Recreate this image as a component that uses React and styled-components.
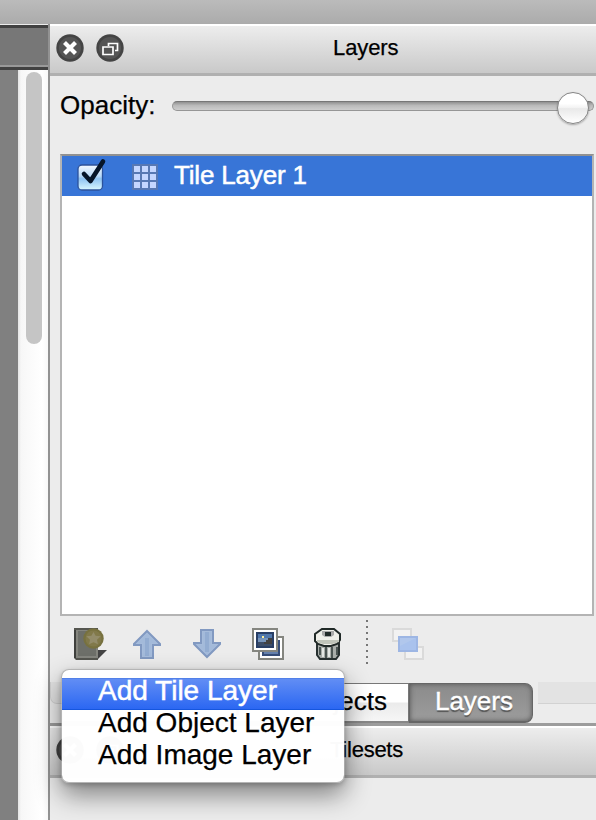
import React from "react";
import styled, { createGlobalStyle, css } from "styled-components";

const Global = createGlobalStyle`
  * { box-sizing: border-box; }
  body { margin: 0; background: #ececec; font-family: "Liberation Sans", Arial, sans-serif; color: #000; overflow: hidden; -webkit-text-stroke: 0.25px currentColor; }
`;

const Window = styled.div`
  position: relative;
  width: 596px;
  height: 820px;
  display: flex;
  flex-direction: column;
  overflow: hidden;
  background: #ececec;
`;
const WindowChrome = styled.div`
  height: 24px;
  flex: none;
  background: linear-gradient(#bbb, #ababab);
`;
const Body = styled.div`
  flex: 1;
  display: flex;
  min-height: 0;
`;
const Editor = styled.div`
  width: 48px;
  display: flex;
  flex-direction: column;
`;
const EditorTabs = styled.div`
  height: 45px;
  flex: none;
  margin-top: 1px;
  border-top: 3px solid #414141;
  border-bottom: 3px solid #414141;
  background: linear-gradient(#777 0 37px, #999 37px);
`;
const EditorArea = styled.div`
  flex: 1;
  display: flex;
`;
const Canvas = styled.div`
  width: 18px;
  background: #808080;
`;
const ScrollTrack = styled.div`
  width: 30px;
  padding: 2px 6px 0 8px;
  background: linear-gradient(90deg, #e4e4e4, #f7f7f7 3px, #fafafa 10px, #fff 24px, #f8f8f8);
`;
const ScrollThumb = styled.div`
  height: 272px;
  border-radius: 8px;
  background: #c5c5c5;
`;
const Dock = styled.div`
  flex: 1;
  display: flex;
  flex-direction: column;
  min-width: 0;
  border-left: 2px solid #929292;
`;
const DockHeader = styled.div`
  height: 52px;
  flex: none;
  display: flex;
  align-items: center;
  gap: 12px;
  padding: 0 0 4px 6px;
  border-top: 2px solid #fff;
  border-bottom: 3px solid #b0b0b0;
  background: linear-gradient(#ededed, #c9c9c9);
  svg { display: block; flex: none; }
`;
const DockTitle = styled.h2`
  flex: 1;
  margin: 0 98px 0 0;
  padding-left: ${(p) => p.$indent}px;
  font-size: 22px;
  line-height: 26px;
  font-weight: 400;
  letter-spacing: ${(p) => p.$tracking || 0}px;
  white-space: nowrap;
`;
const OpacityRow = styled.div`
  height: 78px;
  flex: none;
  display: flex;
  align-items: flex-start;
  padding: 14px 2px 0 10px;
`;
const Label = styled.label`
  width: 112px;
  font-size: 26px;
  line-height: 30px;
`;
const Groove = styled.div`
  flex: 1;
  height: 10px;
  margin-top: 11px;
  display: flex;
  align-items: center;
  justify-content: flex-end;
  padding: 4px 4px 0 0;
  border: 1px solid #969696;
  border-top-color: #777;
  border-radius: 5px;
  background: linear-gradient(#919191, #bbb 45%, #cdcdcd);
`;
const Knob = styled.div`
  width: 32px;
  height: 32px;
  flex: none;
  border-radius: 50%;
  border: 1px solid #858585;
  background: linear-gradient(#fff 35%, #f2f2f2 50%, #e9e9e9 52%, #fff);
  box-shadow: 0 1px 2px rgba(0, 0, 0, 0.3);
`;
const LayerList = styled.div`
  height: 462px;
  flex: none;
  margin: 0 2px 0 10px;
  border: 2px solid #b4b4b4;
  border-top-color: #919191;
  background: #fff;
`;
const LayerRow = styled.div`
  height: 40px;
  display: flex;
  align-items: center;
  padding-left: 14px;
  color: #fff;
  background: #3875d7;
  font-size: 26px;
  svg { display: block; flex: none; }
`;
const GridSlot = styled.span`
  display: flex;
  margin: 2px 0 0 24px;
`;
const LayerName = styled.span`
  margin-left: 16px;
  line-height: 30px;
  padding-bottom: 3px;
  letter-spacing: -0.18px;
  -webkit-text-stroke: 0.5px #fff;
`;
const Toolbar = styled.div`
  height: 66px;
  flex: none;
  display: flex;
  align-items: flex-start;
  padding: 12px 0 0 22px;
  svg { width: 36px; height: 32px; flex: none; margin-right: 24px; }
`;
const ToolSeparator = styled.i`
  width: 2px;
  height: 44px;
  margin: -8px 24px 0 -6px;
  background: repeating-linear-gradient(#777 0 2px, transparent 2px 6px);
`;
const TabBar = styled.div`
  height: 44px;
  flex: none;
  display: flex;
  border-bottom: 3px solid #9c9c9c;
`;
const TabPane = styled.div`
  height: 22px;
  flex: ${(p) => (p.$grow ? 1 : "none")};
  width: 12px;
  margin-left: ${(p) => (p.$grow ? 5 : 0)}px;
  border: solid #d2d2d2;
  border-width: ${(p) => (p.$grow ? "0 0 1px" : "0 0 1px 1px")};
  border-bottom-left-radius: ${(p) => (p.$grow ? 0 : 7)}px;
  background: #e3e3e3;
`;
const Tab = styled.div`
  width: ${(p) => p.$width}px;
  height: 40px;
  margin-top: 1px;
  border: 1px solid #777;
  border-bottom: 2px solid #888;
  text-align: right;
  padding-right: ${(p) => p.$inset}px;
  font-size: 26px;
  line-height: 34px;
  white-space: nowrap;
  background: linear-gradient(#fff 48%, #ebebeb 52%, #f6f6f6);
  ${(p) =>
    p.$active &&
    css`
      color: #fff;
      border-color: #666;
      border-radius: 0 8px 8px 0;
      background: linear-gradient(#8b8b8b, #9c9c9c);
      box-shadow: inset 0 0 5px #555;
      text-shadow: 0 2px 1px #555;
      -webkit-text-stroke: 0.4px #fff;
    `}
`;
const Menu = styled.div`
  position: absolute;
  left: 61px;
  top: 669px;
  width: 284px;
  height: 114px;
  padding: 8px 0;
  border: 1px solid rgba(145, 145, 145, 0.6);
  border-radius: 8px;
  background: rgba(255, 255, 255, 0.98);
  background-clip: padding-box;
  box-shadow: 0 12px 26px rgba(0, 0, 0, 0.45), 0 2px 5px rgba(0, 0, 0, 0.2);
`;
const MenuItem = styled.div`
  height: 32px;
  padding-left: 36px;
  font-size: 28px;
  line-height: 25px;
  letter-spacing: ${(p) => p.$tracking || 0}px;
  white-space: nowrap;
  ${(p) =>
    p.$selected &&
    css`
      color: #fff;
      -webkit-text-stroke: 0.5px #fff;
      background: linear-gradient(rgba(94, 139, 244, 0.98), rgba(39, 100, 242, 0.98));
      border-top: 1px solid #5280e8;
      border-bottom: 1px solid #1656de;
      line-height: 23px;
    `}
`;

const CloseIcon = () => (
  <svg width="28" height="28" viewBox="0 0 28 28">
    <circle cx="14" cy="14" r="13.7" fill="#444" />
    <circle cx="14" cy="14" r="11" fill="#555" />
    <path d="M8.5 8.5l11 11m0-11l-11 11" stroke="#fff" strokeWidth="4.2" />
  </svg>
);
const FloatIcon = () => (
  <svg width="28" height="28" viewBox="0 0 28 28">
    <circle cx="14" cy="14" r="13.7" fill="#444" />
    <circle cx="14" cy="14" r="11" fill="#555" />
    <path d="M12.5 12V9.5h9v7H19M7 13h10v7.5H7z" fill="none" stroke="#fff" strokeWidth="1.7" />
  </svg>
);
const CheckIcon = () => (
  <svg width="32" height="40" viewBox="0 0 32 40">
    <defs>
      <linearGradient id="box" x2="0" y2="1">
        <stop stopColor="#f3f9ff" /><stop offset=".45" stopColor="#b8d9f8" />
        <stop offset=".55" stopColor="#8fc3f2" /><stop offset="1" stopColor="#d9f8ff" />
      </linearGradient>
    </defs>
    <rect x="2" y="9" width="24.5" height="25" rx="4" fill="url(#box)" stroke="#2c529b" strokeWidth="1.3" />
    <path d="M8 18l6.5 7L27 5.5" fill="none" stroke="#061529" strokeWidth="4.6" strokeLinecap="round" strokeLinejoin="round" />
  </svg>
);
const GridIcon = () => (
  <svg width="26" height="26" viewBox="0 0 26 26">
    <path fill="#5878b3" d="M0 0h26v26H0z" />
    <path fill="#c5d6ff" d="M2 2h6v6H2zM10 2h6v6h-6zM18 2h6v6h-6zM2 10h6v6H2zM10 10h6v6h-6zM18 10h6v6h-6zM2 18h6v6H2zM10 18h6v6h-6zM18 18h6v6h-6z" />
  </svg>
);
const NewIcon = () => (
  <svg viewBox="0 0 36 32">
    <path d="M23 22h12l-9 9h-3z" fill="#434343" />
    <path d="M2 0h24v32H4l-2-2z" fill="#555650" />
    <path d="M4 2h22v28H4z" fill="#84857e" />
    <path d="M6 3h18v25H6z" fill="#6d6f69" />
    <path d="M2 2h2v28H2z" fill="#3f403d" />
    <circle cx="21.5" cy="10.5" r="10.2" fill="#77713f" />
    <circle cx="21.5" cy="10.5" r="8" fill="#81794a" />
    <path d="M21.5 4l2.1 3.7 5.1.6-3.7 3.5.9 4.5-4.4-2-4.4 2 .9-4.5-3.7-3.5 5.1-.6z" fill="#938c6a" />
  </svg>
);
const UpPath = "M15 3l13 13v1h-7v13H9V17H2v-1z";
const UpIcon = () => (
  <svg viewBox="0 0 36 32">
    <path d={UpPath} fill="#a6bcdb" stroke="#8199c1" strokeWidth="2" />
    <path d="M15 6l9 9h-5v13h-8V15H6z" fill="#a3bada" />
    <path d="M13 10h4v18h-4z" fill="#93add2" />
  </svg>
);
const DownIcon = () => (
  <svg viewBox="0 0 36 32">
    <g transform="translate(0 32) scale(1 -1)">
      <path d={UpPath} fill="#a6bcdb" stroke="#8199c1" strokeWidth="2" />
      <path d="M15 6l9 9h-5v13h-8V15H6z" fill="#a3bada" />
      <path d="M13 8h4v20h-4z" fill="#93add2" />
    </g>
  </svg>
);
const DuplicateIcon = () => (
  <svg viewBox="0 0 36 32">
    <path d="M7 9h24v22H7z" fill="#fff" stroke="#858680" strokeWidth="2" />
    <path d="M10 12h18v16H10z" fill="#364d78" /><path d="M12 20h14v6H12z" fill="#6480ad" />
    <path d="M1 1h24v22H1z" fill="#fff" stroke="#858680" strokeWidth="2" />
    <path d="M4 4h18v16H4z" fill="#293f66" /><path d="M6 6h14v4H6z" fill="#5278ac" />
    <path d="M6 10h14v4H6z" fill="#7795bb" /><path d="M6 14h14v4H6z" fill="#3c4d68" />
    <path d="M12 16v-2h2v-2h2v-2h4v6z" fill="#414142" /><path d="M10 8h2v2h-2z" fill="#ffef98" />
  </svg>
);
const TrashIcon = () => (
  <svg viewBox="0 0 36 32">
    <path d="M5 13h22v14l-3 4H8l-3-4z" fill="#a9aeaa" stroke="#273030" strokeWidth="2" />
    <path d="M8 19v8M14 19v11M20 19v11M25 19v8" stroke="#4b5553" strokeWidth="2" />
    <path d="M11 20v9M17 20v9" stroke="#e5e8e5" strokeWidth="2" />
    <path d="M10 1h12l6 5v6l-3 4-6 2h-7l-6-2-3-3V6z" fill="#f0f0ea" stroke="#202927" strokeWidth="2" />
    <path d="M5 12h22v2l-7 2h-9l-6-2z" fill="#bfc4b9" />
    <path d="M10 3h12v4l-3 2h-6l-3-2z" fill="#aaa" /><path d="M13 4h6v4h-6z" fill="#222b29" />
  </svg>
);
const HighlightIcon = () => (
  <svg viewBox="0 0 36 32">
    <path d="M1 1h18v12H1zM13 19h18v12H13z" fill="#f2f2f2" stroke="#dadada" strokeWidth="2" />
    <path d="M7 9h18v14H7z" fill="#b1c7ec" stroke="#9db6e4" strokeWidth="2" />
    <path d="M8 18l16-8v12H8z" fill="#a9c2ed" />
  </svg>
);

export default function App() {
  return (
    <>
      <Global />
      <Window>
        <WindowChrome />
        <Body>
          <Editor>
            <EditorTabs />
            <EditorArea>
              <Canvas />
              <ScrollTrack><ScrollThumb /></ScrollTrack>
            </EditorArea>
          </Editor>
          <Dock>
            <DockHeader>
              <CloseIcon /><FloatIcon />
              <DockTitle $indent={197} $tracking={-0.1}>Layers</DockTitle>
            </DockHeader>
            <OpacityRow>
              <Label>Opacity:</Label>
              <Groove><Knob /></Groove>
            </OpacityRow>
            <LayerList>
              <LayerRow>
                <CheckIcon />
                <GridSlot><GridIcon /></GridSlot>
                <LayerName>Tile Layer 1</LayerName>
              </LayerRow>
            </LayerList>
            <Toolbar>
              <NewIcon /><UpIcon /><DownIcon /><DuplicateIcon /><TrashIcon />
              <ToolSeparator />
              <HighlightIcon />
            </Toolbar>
            <TabBar>
              <TabPane />
              <Tab $width={216} $inset={28}>Mini-map</Tab>
              <Tab $width={131} $inset={21}>Objects</Tab>
              <Tab $width={124} $inset={19} $active>Layers</Tab>
              <TabPane $grow />
            </TabBar>
            <DockHeader>
              <CloseIcon /><FloatIcon />
              <DockTitle $indent={194} $tracking={-0.25}>Tilesets</DockTitle>
            </DockHeader>
          </Dock>
        </Body>
        <Menu>
          <MenuItem $selected>Add Tile Layer</MenuItem>
          <MenuItem>Add Object Layer</MenuItem>
          <MenuItem>Add Image Layer</MenuItem>
        </Menu>
      </Window>
    </>
  );
}
